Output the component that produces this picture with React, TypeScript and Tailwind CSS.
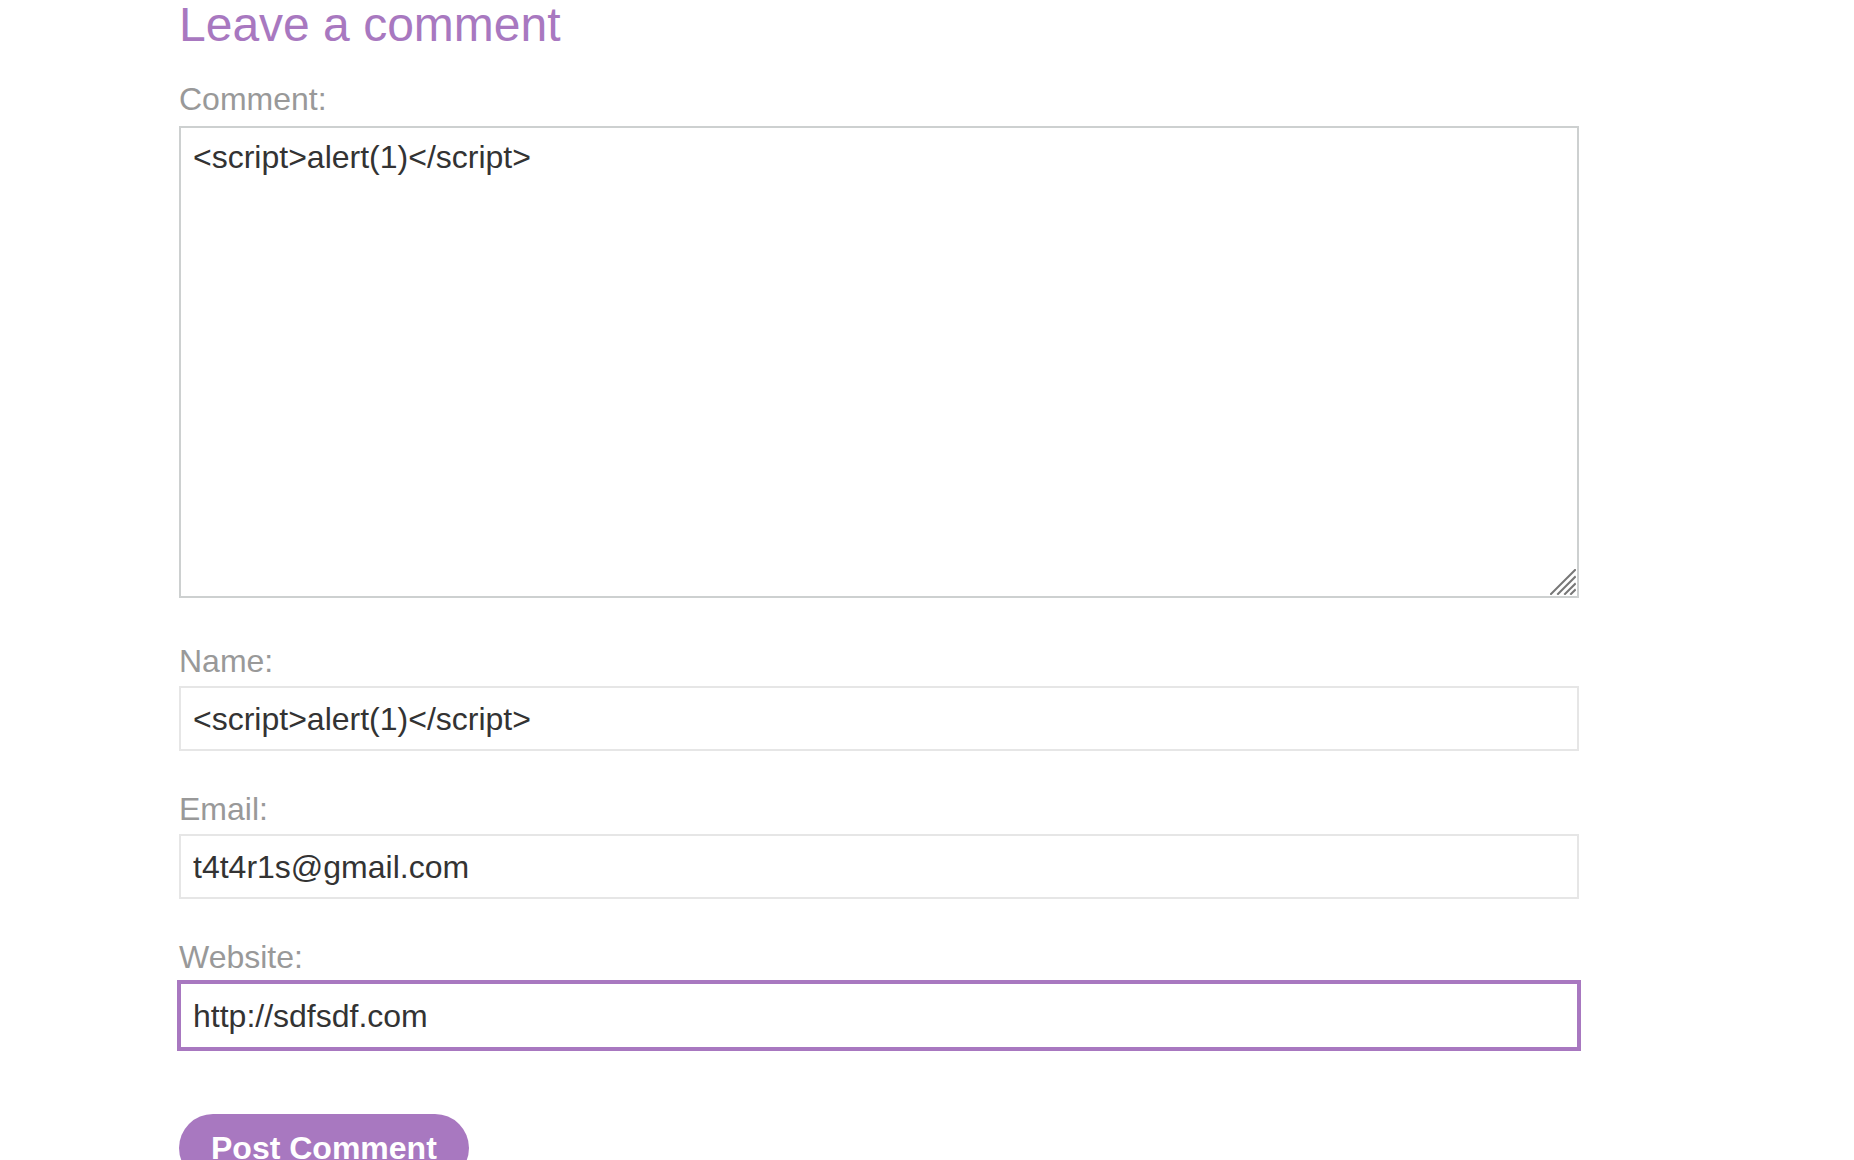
const purple = 'text-[#a878c0]';

function Label({ children, className = '' }: { children: string; className?: string }) {
  return (
    <label className={`block text-[32px] leading-[36px] text-[#999999] ${className}`}>
      {children}
    </label>
  );
}

function Field({
  label,
  value,
  focused = false,
  className = 'mt-[40px]',
}: {
  label: string;
  value: string;
  focused?: boolean;
  className?: string;
}) {
  return (
    <div className={className}>
      <Label>{label}</Label>
      <input
        readOnly
        value={value}
        className={
          focused
            ? 'mt-[7px] box-border block h-[67px] w-[1400px] border-2 border-[#a878c0] bg-white px-[12px] pt-[1px] text-[32px] leading-[36px] text-[#333333] outline-none ring-2 ring-[#a878c0]'
            : 'mt-[7px] box-border block h-[65px] w-[1400px] border-2 border-[#e6e6e6] bg-white px-[12px] pt-[1px] text-[32px] leading-[36px] text-[#333333] outline-none'
        }
      />
    </div>
  );
}

export default function App() {
  return (
    <div className="min-h-screen overflow-hidden bg-white pl-[179px] font-['Liberation_Sans',Arial,sans-serif]">
      <h2 className={`text-[48px] font-normal leading-[50px] ${purple}`}>Leave a comment</h2>

      <form>
        <Label className="mt-[31px]">Comment:</Label>
        <div className="relative mt-[9px] w-[1400px]">
          <textarea
            readOnly
            value="<script>alert(1)</script>"
            className="box-border block h-[472px] w-[1400px] resize-none border-2 border-[#cdd0d0] bg-white px-[12px] pt-[11px] text-[32px] leading-[36px] text-[#333333] outline-none"
          />
          {/* resize grip */}
          <svg
            className="pointer-events-none absolute bottom-[3px] right-[3px] h-[26px] w-[26px]"
            viewBox="0 0 26 26"
          >
            <g stroke="#777777" strokeWidth="2" strokeLinecap="square">
              <line x1="1" y1="25" x2="25" y2="1" />
              <line x1="8" y1="25" x2="25" y2="8" />
              <line x1="15" y1="25" x2="25" y2="15" />
              <line x1="21" y1="25" x2="25" y2="21" />
            </g>
          </svg>
        </div>

        <Field label="Name:" value="<script>alert(1)</script>" className="mt-[45px]" />
        <Field label="Email:" value="t4t4r1s@gmail.com" />
        <Field label="Website:" value="http://sdfsdf.com" focused />

        <button
          type="button"
          className="mt-[65px] rounded-full bg-[#a878c0] px-[32px] pb-[16px] pt-[16px] text-[32px] font-bold leading-[36px] text-white"
        >
          Post Comment
        </button>
      </form>
    </div>
  );
}
